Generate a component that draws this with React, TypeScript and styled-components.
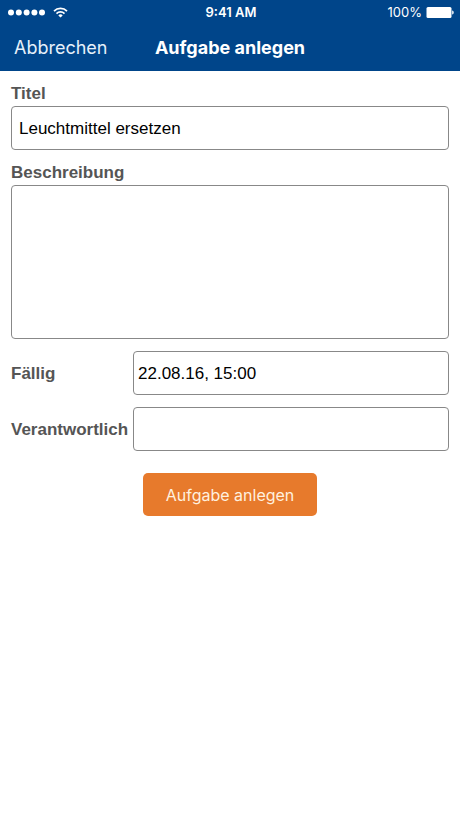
import React, { useState } from 'react';
import styled, { createGlobalStyle } from 'styled-components';

const GlobalStyle = createGlobalStyle`
  *, *::before, *::after { box-sizing: border-box; }
  body {
    margin: 0;
    background: #fff;
    font-family: "Liberation Sans", Arial, sans-serif;
  }
`;

const Header = styled.header`
  background: #00458a;
  color: #fff;
  font-family: Inter, sans-serif;
  height: 71px;
  display: flex;
  flex-direction: column;
`;

const StatusBar = styled.div`
  display: grid;
  grid-template-columns: 1fr auto 1fr;
  align-items: center;
  height: 24px;
  padding: 0 6px 0 8px;
  font-size: 13px;
  line-height: 16px;
`;

const Signal = styled.div`
  display: flex;
  align-items: center;
  gap: 8px;
`;

const Clock = styled.time`
  font-weight: 600;
`;

const Battery = styled.div`
  display: flex;
  align-items: center;
  justify-content: flex-end;
  gap: 4px;
`;

const NavBar = styled.nav`
  flex: 1;
  display: grid;
  grid-template-columns: 1fr auto 1fr;
  align-items: center;
  padding: 0 14px;
`;

const CancelButton = styled.button`
  justify-self: start;
  border: 0;
  padding: 0;
  background: none;
  color: #e6f0fa;
  font: 400 18px/24px Inter, sans-serif;
  cursor: pointer;
`;

const PageTitle = styled.h1`
  margin: 0;
  font-size: 18px;
  line-height: 24px;
  font-weight: 700;
`;

const Form = styled.form`
  display: flex;
  flex-direction: column;
  gap: 12px;
  padding: 12px 11px 24px;
`;

const Field = styled.div<{ $inline?: boolean }>`
  display: grid;
  grid-template-columns: ${(p) => (p.$inline ? '115px 1fr' : '1fr')};
  align-items: center;
  gap: ${(p) => (p.$inline ? '7px' : '2px')};
`;

const Label = styled.label`
  padding-top: 1px;
  color: #555;
  font-size: 17px;
  line-height: 20px;
  font-weight: 700;
  white-space: nowrap;
`;

const TextInput = styled.input<{ $inset: number }>`
  width: 100%;
  min-width: 0;
  height: 44px;
  padding: 2px ${(p) => p.$inset}px 0;
  border: 1px solid #888;
  border-radius: 4px;
  background: #fff;
  color: #000;
  font: 17px/20px "Liberation Sans", Arial, sans-serif;
`;

const TextArea = styled.textarea`
  display: block;
  width: 100%;
  height: 154px;
  padding: 8px;
  border: 1px solid #888;
  border-radius: 4px;
  background: #fff;
  color: #000;
  font: 17px/20px "Liberation Sans", Arial, sans-serif;
  resize: none;
`;

const SubmitButton = styled.button`
  align-self: center;
  height: 43px;
  margin-top: 10px;
  padding: 0 23px;
  border: 0;
  border-radius: 5px;
  background: #e77a2c;
  color: #fff0df;
  font: 400 16px/20px Inter, sans-serif;
  cursor: pointer;
`;

const SignalDots = () => (
  <svg width="37" height="7" viewBox="0 0 37 7" fill="#fff" aria-hidden="true">
    {[3, 10.8, 18.6, 26.4, 34].map((x) => (
      <circle key={x} cx={x} cy="3.5" r="3" />
    ))}
  </svg>
);

const WifiIcon = () => (
  <svg width="15" height="11" viewBox="0 0 15 11" fill="none" stroke="#fff" strokeWidth="1.7" aria-hidden="true">
    <path d="M1 4.1a9.2 9.2 0 0 1 13 0" />
    <path d="M3.5 6.6a5.7 5.7 0 0 1 8 0" />
    <path d="M7.5 10.6 5.3 8.4a3.1 3.1 0 0 1 4.4 0Z" fill="#fff" stroke="none" />
  </svg>
);

const BatteryIcon = () => (
  <svg width="28" height="11" viewBox="0 0 28 11" fill="#fff" aria-hidden="true">
    <rect x="0.5" y="0" width="25" height="11" rx="1.5" />
    <path d="M26.2 3.5c2 .5 2 3.5 0 4Z" />
  </svg>
);

export default function App() {
  const [title, setTitle] = useState('Leuchtmittel ersetzen');
  const [description, setDescription] = useState('');
  const [due, setDue] = useState('22.08.16, 15:00');
  const [assignee, setAssignee] = useState('');

  return (
    <>
      <GlobalStyle />
      <Header>
        <StatusBar>
          <Signal>
            <SignalDots />
            <WifiIcon />
          </Signal>
          <Clock>9:41 AM</Clock>
          <Battery>
            <span>100%</span>
            <BatteryIcon />
          </Battery>
        </StatusBar>
        <NavBar>
          <CancelButton type="button">Abbrechen</CancelButton>
          <PageTitle>Aufgabe anlegen</PageTitle>
        </NavBar>
      </Header>
      <main>
        <Form onSubmit={(e) => e.preventDefault()}>
          <Field>
            <Label htmlFor="title">Titel</Label>
            <TextInput id="title" $inset={7} value={title} onChange={(e) => setTitle(e.target.value)} />
          </Field>
          <Field>
            <Label htmlFor="description">Beschreibung</Label>
            <TextArea id="description" value={description} onChange={(e) => setDescription(e.target.value)} />
          </Field>
          <Field $inline>
            <Label htmlFor="due">Fällig</Label>
            <TextInput id="due" $inset={4} value={due} onChange={(e) => setDue(e.target.value)} />
          </Field>
          <Field $inline>
            <Label htmlFor="assignee">Verantwortlich</Label>
            <TextInput id="assignee" $inset={4} value={assignee} onChange={(e) => setAssignee(e.target.value)} />
          </Field>
          <SubmitButton type="submit">Aufgabe anlegen</SubmitButton>
        </Form>
      </main>
    </>
  );
}
